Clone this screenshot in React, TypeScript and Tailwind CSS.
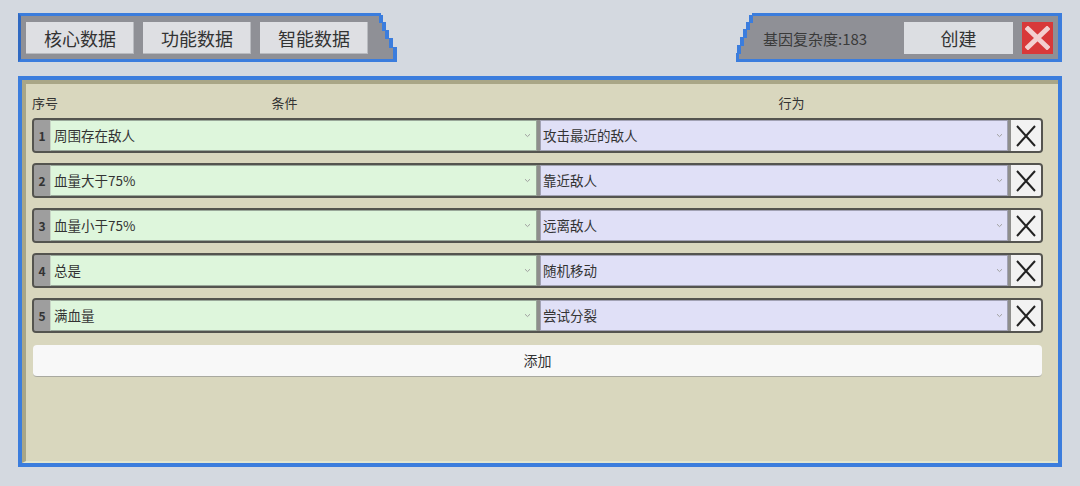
import React from "react";

const rows = [
  { n: 1, cond: "周围存在敌人", act: "攻击最近的敌人" },
  { n: 2, cond: "血量大于75%", act: "靠近敌人" },
  { n: 3, cond: "血量小于75%", act: "远离敌人" },
  { n: 4, cond: "总是", act: "随机移动" },
  { n: 5, cond: "满血量", act: "尝试分裂" },
];

const BLUE = "#3b7ddd";

function Chevron() {
  return (
    <svg width="7" height="5" viewBox="0 0 7 5" className="shrink-0">
      <path d="M1 1.2 L3.5 3.6 L6 1.2" fill="none" stroke="#a0a0a0" strokeWidth="1" />
    </svg>
  );
}

function LeftStair() {
  return (
    <svg width="28" height="49" viewBox="0 0 28 49" className="block shrink-0">
      <polygon
        points="0,3 10,3 10,10 13,10 13,18 16,18 16,26 20,26 20,35 24,35 24,46 0,46"
        fill="#8f9096"
      />
      <rect x="0" y="0" width="12" height="3" fill={BLUE} />
      <rect x="10" y="2" width="4" height="8" fill={BLUE} />
      <rect x="13" y="9" width="4" height="9" fill={BLUE} />
      <rect x="16" y="17" width="4" height="9" fill={BLUE} />
      <rect x="20" y="25" width="4" height="10" fill={BLUE} />
      <rect x="24" y="34" width="4" height="15" fill={BLUE} />
      <rect x="0" y="46" width="28" height="3" fill={BLUE} />
    </svg>
  );
}

function RightStair() {
  return (
    <svg width="20" height="49" viewBox="0 0 20 49" className="block shrink-0">
      <polygon
        points="20,3 17,3 17,10 14,10 14,17 11,17 11,25 8,25 8,33 5,33 5,41 2,41 2,46 20,46"
        fill="#8f9096"
      />
      <rect x="16" y="0" width="4" height="3" fill={BLUE} />
      <rect x="13" y="2" width="4" height="8" fill={BLUE} />
      <rect x="10" y="9" width="4" height="8" fill={BLUE} />
      <rect x="7" y="16" width="4" height="9" fill={BLUE} />
      <rect x="4" y="24" width="4" height="9" fill={BLUE} />
      <rect x="1" y="32" width="4" height="9" fill={BLUE} />
      <rect x="0" y="40" width="3" height="9" fill={BLUE} />
      <rect x="0" y="46" width="20" height="3" fill={BLUE} />
    </svg>
  );
}

function TabButton({ label }: { label: string }) {
  return (
    <div className="w-[108px] h-[32px] bg-[#dedfe3] shadow-[inset_-1px_-1px_0_#b9bbc0] flex items-center justify-center text-[18px] text-[#333] leading-none">
      {label}
    </div>
  );
}

function Row({ n, cond, act }: { n: number; cond: string; act: string }) {
  return (
    <div className="flex h-[35px] rounded-[4px] border-2 border-[#54544f] bg-[#8e8e8c]">
      <div className="w-[16px] bg-[#9e9e9e] rounded-l-[2px] flex items-center justify-center text-[12px] font-bold text-[#333] leading-none">
        {n}
      </div>
      <div className="w-[487px] h-full bg-[#def6dc] border border-[#9aa89a] border-l-[#c9d6c7] flex items-center justify-between pl-[3px] pr-[5px] text-[13.5px] text-[#333]">
        <span>{cond}</span>
        <Chevron />
      </div>
      <div className="w-[3px]" />
      <div className="w-[468px] h-full bg-[#e0e0f7] border border-[#a2a2b4] flex items-center justify-between pl-[2px] pr-[4px] text-[13.5px] text-[#333]">
        <span>{act}</span>
        <Chevron />
      </div>
      <div className="w-[3px]" />
      <div className="w-[30px] h-full bg-[#f2f2f2] rounded-r-[2px] flex items-center justify-center">
        <svg width="20" height="22" viewBox="0 0 20 22">
          <path d="M1 1 L19 21 M19 1 L1 21" stroke="#222" strokeWidth="2" fill="none" />
        </svg>
      </div>
    </div>
  );
}

export default function App() {
  return (
    <div
      className="w-[1080px] h-[486px] bg-[#d4d9e0] pt-[13px] px-[18px] overflow-hidden"
      style={{ fontFamily: '"Noto Sans CJK SC", "Noto Sans", sans-serif' }}
    >
      <div className="flex justify-between h-[49px]">
        <div className="flex">
          <div className="h-full flex items-start gap-[9px] bg-[#8f9096] border-t-[3px] border-b-[3px] border-l-[3px] border-[#3b7ddd] border-l-[#2f69c2] pl-[5px] pt-[6px] pr-[1px]">
            <TabButton label="核心数据" />
            <TabButton label="功能数据" />
            <TabButton label="智能数据" />
          </div>
          <LeftStair />
        </div>
        <div className="flex">
          <RightStair />
          <div className="h-full flex items-start bg-[#8f9096] border-t-[3px] border-b-[3px] border-r-[4px] border-[#3b7ddd] pl-[7px] pt-[6px] pr-[5px]">
            <div className="w-[141px] h-[32px] flex items-center text-[15px] text-[#3a3a3a] leading-none">
              基因复杂度:183
            </div>
            <div className="w-[109px] h-[32px] bg-[#dcdee2] flex items-center justify-center text-[18px] text-[#333] leading-none">
              创建
            </div>
            <div className="ml-[9px] w-[31px] h-[32px] bg-[#d8393a] flex items-center justify-center">
              <svg width="25" height="24" viewBox="0 0 25 24">
                <path d="M3 3 L22 21 M22 3 L3 21" stroke="#f3d0d0" strokeWidth="5" fill="none" strokeLinecap="square" />
              </svg>
            </div>
          </div>
        </div>
      </div>

      <div className="mt-[14px] h-[391px] border-4 border-[#3b7ddd]">
        <div className="h-full bg-[#d9d7be] border-l-4 border-t-4 border-[#a9a687] border-b-2 border-b-[#e2e6cf] pl-[6px] pr-[15px] pt-[10px]">
          <div className="flex h-[18px] text-[13px] leading-[18px] text-[#333] mb-[6px]">
            <div className="w-[505px] grid grid-cols-[1fr_auto_1fr]">
              <span>序号</span>
              <span>条件</span>
              <span />
            </div>
            <div className="w-[3px]" />
            <div className="flex-1 text-center">行为</div>
          </div>
          <div className="flex flex-col gap-[10px]">
            {rows.map((r) => (
              <Row key={r.n} {...r} />
            ))}
          </div>
          <div className="mt-[12px] mx-[1px] h-[32px] bg-[#f8f8f8] rounded-[4px] border-b border-[#a9a9a0] flex items-center justify-center text-[14px] text-[#333]">
            添加
          </div>
        </div>
      </div>
    </div>
  );
}
